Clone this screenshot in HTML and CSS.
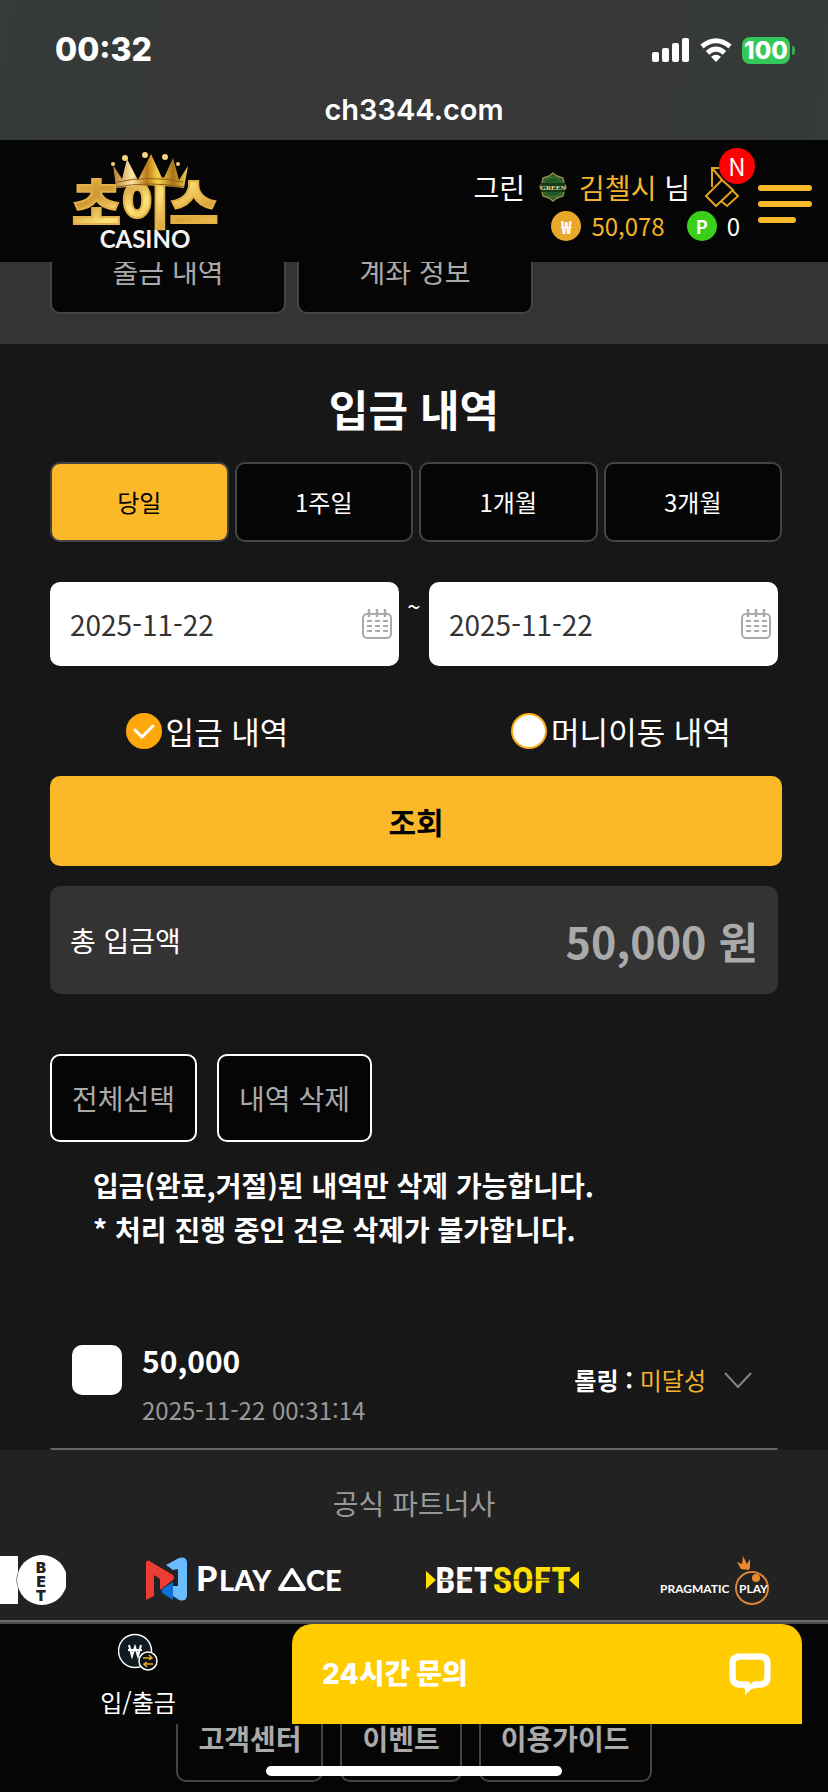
FILE: index.html
```html
<!DOCTYPE html>
<html lang="ko">
<head>
<meta charset="utf-8">
<meta name="viewport" content="width=device-width, initial-scale=1">
<title>입금 내역</title>
<link rel="stylesheet" href="styles.css">
</head>
<body>
<div class="status">
  <div class="status-row">
    <span class="clock">00:32</span>
    <div class="status-icons">
      <svg width="38" height="24" viewBox="0 0 38 24" fill="#fff"><rect y="14" width="7" height="10" rx="2"/><rect x="10" y="10" width="7" height="14" rx="2"/><rect x="20" y="5" width="7" height="19" rx="2"/><rect x="30" width="7" height="24" rx="2"/></svg>
      <svg width="32" height="24" viewBox="0 0 32 24"><path d="M2 8.500q14-11.500 28 0M7.500 14.800q8.500-7.500 17 0" fill="none" stroke="#fff" stroke-width="5"/><path d="M16 24l-5-5.200q5-4 10 0z" fill="#fff"/></svg>
      <span class="battery">100</span>
    </div>
  </div>
  <div class="address">ch3344.com</div>
</div>

<header class="header">
  <a class="brand" href="#" aria-label="초이스 CASINO">
    <svg width="160" height="108" viewBox="0 0 160 108">
      <defs>
        <linearGradient id="gold" x1="0" y1="0" x2="1" y2="1"><stop offset="0" stop-color="#f4c552"/><stop offset=".3" stop-color="#cf9834"/><stop offset=".5" stop-color="#ffe27a"/><stop offset=".75" stop-color="#dca43a"/><stop offset="1" stop-color="#f9d565"/></linearGradient>
        <linearGradient id="crown" x1="0" x2="1" y2="0"><stop offset="0" stop-color="#b37a2d"/><stop offset=".25" stop-color="#ffe5a6"/><stop offset=".45" stop-color="#b97916"/><stop offset=".6" stop-color="#f9d348"/><stop offset=".8" stop-color="#a87415"/><stop offset="1" stop-color="#f3cf58"/></linearGradient>
      </defs>
      <text class="brand-ko" x="6" y="77" fill="url(#gold)" stroke="#e3b047" stroke-width="2">초이스</text>
      <path d="M50 40 47 18l9 14 5-20 11 21 13-26 12 26 10-22 6 22 9-14-4 22q-34-5-67 0z" fill="url(#crown)"/>
      <path d="M51 35q33-7 66 0M50 40q34-6 68 0" fill="none" stroke="#8f6017" stroke-width="1"/>
      <g fill="#f6d27c"><circle cx="47" cy="17" r="2"/><circle cx="59" cy="11" r="3"/><circle cx="79" cy="8" r="3"/><circle cx="99" cy="10" r="3"/><circle cx="112" cy="17" r="2"/></g>
      <text class="brand-en" x="79" y="101" text-anchor="middle">CASINO</text>
    </svg>
  </a>
  <div class="account">
    <div class="account-user">
      <span>그린</span>
      <svg width="28" height="30" viewBox="0 0 28 30"><path d="M14 1l4 3 6 2 1 5 2 4-2 4-1 5-6 2-4 3-4-3-6-2-1-5-2-4 2-4 1-5 6-2z" fill="#1f5a26" stroke="#8d8b49" stroke-width="1.500"/><circle cx="14" cy="15" r="10" fill="none" stroke="#547335"/><path d="M2 11h24v9H2z" fill="#153b19"/><text class="grade" x="14" y="18" text-anchor="middle">GREEN</text></svg>
      <span><span class="gold">김첼시</span> 님</span>
      <a class="notes" href="#" aria-label="쪽지">
        <svg width="36" height="42" viewBox="0 0 36 42" fill="none" stroke="#e3a21b" stroke-width="2"><path d="M8 21V2h8M8 2l11 13M18 14 2 30l10 10 17-16zM28 24l6 6-11 10-6-5"/></svg>
        <span class="badge">N</span>
      </a>
    </div>
    <div class="account-money">
      <span class="coin">₩</span><span class="gold">50,078</span>
      <span class="coin coin-point">P</span><span>0</span>
    </div>
  </div>
  <button class="menu" type="button" aria-label="메뉴"><span></span><span></span><span></span></button>
</header>

<nav class="tabs">
  <a href="#">출금 내역</a>
  <a href="#">계좌 정보</a>
</nav>

<main class="main">
  <h1>입금 내역</h1>
  <div class="periods">
    <button class="period active" type="button">당일</button>
    <button class="period" type="button">1주일</button>
    <button class="period" type="button">1개월</button>
    <button class="period" type="button">3개월</button>
  </div>
  <div class="dates">
    <label class="date"><input type="text" value="2025-11-22" aria-label="시작일">
      <svg width="30" height="30" viewBox="0 0 30 30" fill="none" stroke="#aaa" stroke-width="2"><rect x="1" y="5" width="28" height="24" rx="4"/><path d="M7 0v8M15 0v8M23 0v8" stroke-width="2.500"/><path d="M5 12h5m3 0h5m3 0h5M5 17h5m3 0h5m3 0h5M5 22h5m3 0h5m3 0h5"/></svg></label>
    <span class="tilde">~</span>
    <label class="date"><input type="text" value="2025-11-22" aria-label="종료일">
      <svg width="30" height="30" viewBox="0 0 30 30" fill="none" stroke="#aaa" stroke-width="2"><rect x="1" y="5" width="28" height="24" rx="4"/><path d="M7 0v8M15 0v8M23 0v8" stroke-width="2.500"/><path d="M5 12h5m3 0h5m3 0h5M5 17h5m3 0h5m3 0h5M5 22h5m3 0h5m3 0h5"/></svg></label>
  </div>
  <div class="kinds">
    <label class="kind"><span class="radio"><input type="radio" name="kind" checked><svg viewBox="0 0 36 36"><path d="M9 17l7 7 11-11" fill="none" stroke="#fff" stroke-width="3" stroke-linecap="round"/></svg></span>입금 내역</label>
    <label class="kind"><span class="radio"><input type="radio" name="kind"></span>머니이동 내역</label>
  </div>
  <button class="search" type="button">조회</button>
  <div class="total"><span>총 입금액</span><strong>50,000 원</strong></div>
  <div class="actions">
    <button type="button">전체선택</button>
    <button type="button">내역 삭제</button>
  </div>
  <p class="notice">입금(완료,거절)된 내역만 삭제 가능합니다.<br>* 처리 진행 중인 건은 삭제가 불가합니다.</p>
  <div class="entry">
    <input class="pick" type="checkbox" aria-label="50,000 선택">
    <div class="entry-info"><strong>50,000</strong><time>2025-11-22 00:31:14</time></div>
    <div class="rolling"><b>롤링 :</b> <span class="gold">미달성</span></div>
    <svg width="28" height="17" viewBox="0 0 28 17"><path d="M1 1l13 14L27 1" fill="none" stroke="#858585" stroke-width="2"/></svg>
  </div>
</main>

<section class="partners">
  <h2>공식 파트너사</h2>
  <div class="logos">
    <svg width="66" height="50" viewBox="0 0 66 50"><path d="M0 1h18v16q-3 8 0 16v16H0z" fill="#fff"/><circle cx="42" cy="25" r="25" fill="#fff"/><g class="bet10"><text x="41" y="18">B</text><text x="41" y="32">E</text><text x="41" y="46">T</text></g></svg>
    <svg width="200" height="50" viewBox="0 0 200 50"><path d="M0 7q2-3 5 0l22 13q2 3 0 5L14 35V24l-6-4v21l-8 4z" fill="#ed3c33"/><path d="M16 34l11-7v18l-11-7z" fill="#0c70d5"/><path d="M20 10l13-7q7-2 8 4v34q-1 6-8 4l-6-4V31h5V14l-5 1z" fill="#69bcff"/><g class="playace"><text x="50" y="36" class="cap">P</text><text x="73" y="36">LAY</text><text x="160" y="36">CE</text></g><path d="M134 34l12-19 12 19z" fill="none" stroke="#fff" stroke-width="4" stroke-linejoin="round"/></svg>
    <svg width="153" height="50" viewBox="0 0 153 50"><path d="M0 16l10 9-10 9zM153 16l-10 9 10 9z" fill="#ffe000"/><text class="betsoft" x="77" y="38" text-anchor="middle"><tspan fill="#fff">BET</tspan><tspan fill="#ffe000">SOFT</tspan></text><path d="M14 25h125" stroke="#222"/></svg>
    <svg width="112" height="50" viewBox="0 0 112 50"><circle cx="93" cy="33" r="16" fill="none" stroke="#d98432" stroke-width="2"/><circle cx="97" cy="23" r="4" fill="#e98b2d"/><path d="M82 14L78 7l5 2 1-8 4 8 3-5v8l-1 3z" fill="#e98b2d"/><text class="pragmatic" x="1" y="38">PRAGMATIC</text><text class="pragmatic" x="80" y="38">PLAY</text></svg>
  </div>
</section>

<nav class="dock">
  <a class="dock-item" href="#">
    <svg width="40" height="40" viewBox="0 0 40 40"><circle cx="17" cy="18" r="16.500" fill="#0f1b20" stroke="#fff" stroke-width="1.500"/><path d="M11 12l3 11 3-9 3 9 3-11M10 17h14" fill="none" stroke="#fff" stroke-width="2"/><circle cx="30" cy="28" r="9" fill="#0b1012" stroke="#fff" stroke-width="1.500"/><path d="M25 25h9m-3-3 3 3-3 2M35 31h-9m3-2-3 2 3 3" fill="none" stroke="#e9a82a" stroke-width="1.500"/></svg>
    <span>입/출금</span>
  </a>
  <button class="chat" type="button">
    <span>24시간 문의</span>
    <svg width="42" height="42" viewBox="0 0 42 42"><path d="M10 3.500h22q6.500 1 6.500 7v14q0 6-6.500 7h-6l-8 7v-7h-8q-6.500-1-6.500-7v-14q0-6 6.500-7z" fill="none" stroke="#fff" stroke-width="6.500" stroke-linejoin="round" clip-path="inset(0 0 6px 0)"/><path d="M16 31h12L16 42z" fill="#fff"/></svg>
  </button>
</nav>

<footer class="footer">
  <a href="#">고객센터</a>
  <a href="#">이벤트</a>
  <a href="#">이용가이드</a>
  <span class="home-bar"></span>
</footer>
</body>
</html>
```
FILE: styles.css
```css
* { box-sizing: border-box; }
body {
  margin: 0;
  background: #181717;
  color: #fff;
  font-family: "Noto Sans CJK KR", "Noto Sans", sans-serif;
  font-size: 28px;
  line-height: 40px;
}
a { color: inherit; text-decoration: none; }
button, input { font: inherit; color: inherit; margin: 0; }
button { cursor: pointer; }
svg { display: block; flex: none; }
h1, h2, p { margin: 0; }
.gold { color: #f5b32b; }

.status {
  height: 140px;
  padding: 30px 34px 0 55px;
  background: linear-gradient(100deg, #343b39, #373837 30%, #373837 70%, #343b39);
  font-family: Inter, sans-serif;
}
.status-row { display: flex; justify-content: space-between; align-items: center; height: 40px; }
.clock { font-size: 32px; font-weight: 800; }
.status-icons { display: flex; align-items: center; gap: 10px; }
.battery {
  position: relative;
  width: 48px;
  margin-right: 4px;
  border-radius: 8px;
  background: #35c759;
  font-size: 24px;
  font-weight: 800;
  line-height: 27px;
  text-align: center;
}
.battery::after {
  content: "";
  position: absolute;
  top: 9px;
  right: -5px;
  width: 3px;
  height: 9px;
  border-radius: 0 3px 3px 0;
  background: #35a957;
}
.address { margin: 20px 21px 0 0; font-size: 29px; font-weight: 600; text-align: center; }

.header {
  position: relative;
  z-index: 1;
  display: flex;
  align-items: center;
  height: 122px;
  padding: 0 16px 0 66px;
  background: #050505;
}
.brand { margin-right: auto; }
.brand-ko { font-size: 53px; font-weight: 900; }
.brand-en { fill: #f4f4f4; font-family: Lato, sans-serif; font-size: 24px; font-weight: 700; }
.account { display: flex; flex-direction: column; align-items: flex-end; margin-right: 18px; padding-top: 8px; }
.account-user { display: flex; align-items: center; gap: 14px; height: 42px; }
.account-user svg { margin-right: -2px; }
.grade { fill: #e6dfa0; font-family: "Liberation Serif", serif; font-size: 7px; font-weight: 700; }
.notes { position: relative; }
.notes svg { margin-right: 0; }
.badge {
  position: absolute;
  top: -18px;
  right: -15px;
  width: 36px;
  height: 36px;
  border-radius: 50%;
  background: #f00;
  font-size: 24px;
  line-height: 36px;
  text-align: center;
}
.account-money { display: flex; align-items: center; gap: 10px; height: 36px; font-size: 24px; }
.coin {
  width: 30px;
  height: 30px;
  border-radius: 50%;
  background: #e9a82a;
  font-size: 18px;
  font-weight: 700;
  line-height: 30px;
  text-align: center;
}
.coin-point { margin-left: 12px; background: #3bce1b; }
.menu {
  display: flex;
  flex-direction: column;
  gap: 10px;
  width: 54px;
  padding: 26px 0 20px;
  border: 0;
  background: none;
}
.menu span { width: 54px; height: 6px; border-radius: 3px; background: #fbb829; }
.menu span:last-child { width: 38px; }

.tabs { display: flex; gap: 11px; margin-top: -48px; padding: 14px 50px 30px; background: #353333; }
.tabs a {
  width: 236px;
  height: 86px;
  border: 2px solid #444;
  border-radius: 10px;
  background: #050505;
  color: #aaa;
  line-height: 82px;
  text-align: center;
}

.main { padding-top: 40px; }
h1 { font-size: 43px; line-height: 48px; text-align: center; }
.periods { display: grid; grid-template-columns: repeat(4, 1fr); gap: 6px; margin: 30px 46px 0 50px; }
.period {
  height: 80px;
  border: 2px solid #444;
  border-radius: 10px;
  background: #050505;
  font-size: 24px;
}
.period.active { background: #fbb829; color: #000; }
.dates { display: flex; margin: 40px 50px 0; }
.date {
  display: flex;
  flex: 1;
  align-items: center;
  min-width: 0;
  height: 84px;
  padding: 0 7px 0 20px;
  border-radius: 10px;
  background: #fff;
}
.date input { flex: 1; min-width: 0; padding: 0; border: 0; outline: 0; background: none; color: #333; }
.tilde { flex: none; width: 30px; padding-top: 4px; font-size: 24px; text-align: center; }
.kinds { display: grid; grid-template-columns: 1fr 1fr; margin-top: 45px; }
.kind { display: flex; justify-content: center; align-items: center; gap: 4px; font-size: 31px; }
.radio { display: grid; }
.radio > * { grid-area: 1 / 1; width: 36px; height: 36px; }
.radio input { appearance: none; border: 2px solid #fba919; border-radius: 50%; background: #fff; }
.radio input:checked { background: #ffa80b; border-color: #ffa80b; }
.search {
  display: block;
  width: calc(100% - 96px);
  height: 90px;
  margin: 25px 46px 0 50px;
  border: 0;
  border-radius: 10px;
  background: #fbb829;
  color: #000;
  font-size: 30px;
  font-weight: 700;
}
.total {
  display: flex;
  justify-content: space-between;
  align-items: center;
  height: 108px;
  margin: 20px 50px 0;
  padding: 0 20px;
  border-radius: 10px;
  background: #333;
}
.total strong { color: #aaa; font-size: 43px; }
.actions { display: flex; gap: 20px; margin: 60px 50px 0; }
.actions button {
  height: 88px;
  padding: 0 20px;
  border: 2px solid #fff;
  border-radius: 10px;
  background: #050505;
  color: #aaa;
}
.notice { margin: 21px 93px 0; font-weight: 700; line-height: 44px; }
.entry {
  display: flex;
  align-items: center;
  height: 138px;
  margin: 61px 50px 0;
  padding: 0 26px 0 22px;
  border-bottom: 2px solid #666;
  border-radius: 0 0 2px 2px;
}
.pick { appearance: none; width: 50px; height: 50px; margin: -20px 20px 0 0; border-radius: 10px; background: #fff; }
.entry-info { display: flex; flex-direction: column; gap: 10px; margin-right: auto; padding-top: 10px; }
.entry-info strong { font-size: 30px; }
.entry-info time { color: #999; font-size: 24px; }
.rolling { margin-right: 18px; font-size: 24px; }

.partners { height: 172px; padding-top: 33px; overflow: hidden; border-bottom: 2px solid #6b6b6b; background: #222; }
h2 { color: #999; font-size: 28px; font-weight: 400; text-align: center; }
.logos { display: flex; gap: 80px; margin-top: 32px; }
.bet10 { fill: #222; font-family: Inter, sans-serif; font-size: 15px; font-weight: 900; text-anchor: middle; }
.playace { fill: #fff; font-family: Lato, sans-serif; font-size: 29px; font-weight: 900; }
.playace .cap { font-size: 34px; }
.betsoft { font-family: "Roboto Condensed", "Liberation Sans Narrow", sans-serif; font-size: 36px; font-weight: 700; }
.pragmatic { fill: #fff; font-family: Lato, sans-serif; font-size: 12px; font-weight: 700; }

.dock {
  position: relative;
  z-index: 1;
  display: flex;
  height: 102px;
  border-top: 2px solid #4a4a4a;
  background: #050505;
}
.dock-item { display: flex; flex-direction: column; align-items: center; gap: 9px; width: 33.333%; padding-top: 9px; font-size: 24px; }
.chat {
  display: flex;
  flex: 1;
  justify-content: space-between;
  align-items: center;
  margin: 0 26px 0 16px;
  padding: 0 31px 0 30px;
  border: 0;
  border-radius: 20px 20px 0 0;
  background: #fc0;
  font-family: Inter, "Noto Sans CJK KR", sans-serif;
  font-weight: 800;
}
.footer {
  position: relative;
  display: flex;
  justify-content: center;
  gap: 17px;
  margin-top: -30px;
  padding-bottom: 10px;
  background: #050505;
}
.footer a {
  height: 88px;
  padding: 0 20px;
  border: 2px solid #444;
  border-radius: 10px;
  color: #aaa;
  font-weight: 700;
  line-height: 84px;
}
.home-bar {
  position: absolute;
  bottom: 16px;
  left: 50%;
  width: 296px;
  height: 10px;
  margin-left: -148px;
  border-radius: 5px;
  background: #fff;
}
```
